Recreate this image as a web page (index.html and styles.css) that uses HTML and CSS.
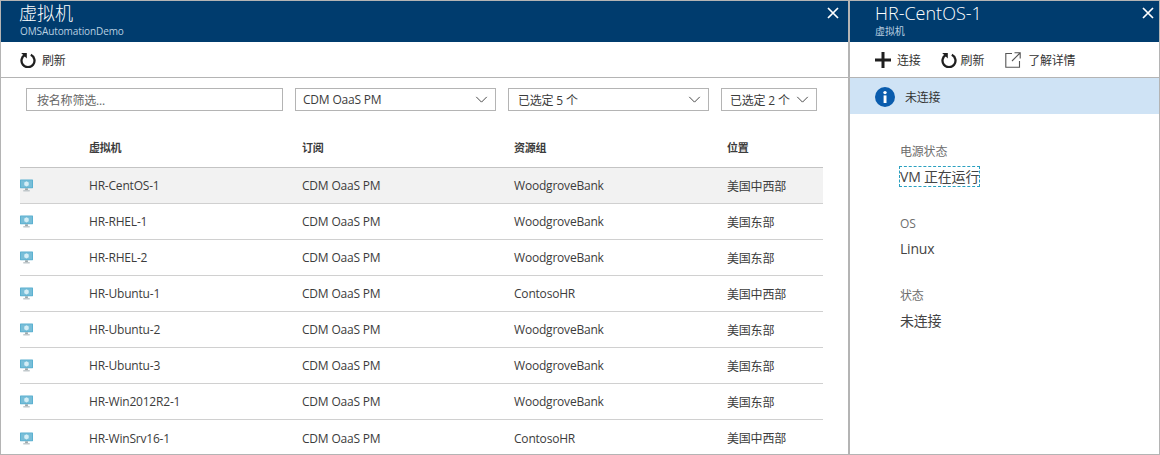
FILE: index.html
```html
<!DOCTYPE html>
<html lang="zh-CN">
<head>
    <meta charset="UTF-8">
    <title>虚拟机</title>
    <link rel="stylesheet" href="styles.css">
</head>
<body>
  <svg class="defs" width="0" height="0">
    <symbol id="refresh" viewBox="0 0 16 16">
      <path d="M5.2 2.8A6.5 6.5 0 1 0 10.8 2.8" fill="none" stroke="#1f1f1f" stroke-width="2.3"/>
      <path d="M1.2 1H6.8V6.6Z" fill="#1f1f1f"/>
    </symbol>
    <symbol id="chevron" viewBox="0 0 14 8">
      <path d="M1 1L7 7L13 1" fill="none" stroke="#444" stroke-width="1.1"/>
    </symbol>
    <symbol id="vm" viewBox="0 0 14 14">
      <rect x="0" y="0.5" width="14" height="9.5" rx="0.5" fill="#5ab0d0"/>
      <rect x="1" y="1.5" width="12" height="7.5" fill="#78bed8"/>
      <path d="M7 2.5L9.4 3.8V6.6L7 8L4.6 6.6V3.8Z" fill="#d5eef6"/>
      <rect x="5.5" y="10" width="3" height="2" fill="#9aa6aa"/>
      <rect x="3.5" y="12" width="7" height="1.4" fill="#b8c1c4"/>
    </symbol>
    <symbol id="close" viewBox="0 0 12 12">
      <path d="M1 1L11 11M11 1L1 11" stroke="#fff" stroke-width="1.7"/>
    </symbol>
  </svg>

  <div class="page">
    <section class="blade blade-list">
      <header class="blade-head">
        <div>
          <h1>虚拟机</h1>
          <div class="sub">OMSAutomationDemo</div>
        </div>
        <svg class="close"><use href="#close"/></svg>
      </header>
      <div class="toolbar">
        <span class="cmd"><svg class="ico"><use href="#refresh"/></svg>刷新</span>
      </div>
      <div class="filters">
        <div class="field f-name">按名称筛选...</div>
        <div class="field f-sub">CDM OaaS PM<svg class="chev"><use href="#chevron"/></svg></div>
        <div class="field f-group">已选定 5 个<svg class="chev"><use href="#chevron"/></svg></div>
        <div class="field f-loc">已选定 2 个<svg class="chev"><use href="#chevron"/></svg></div>
      </div>
      <div class="table">
        <div class="row head"><span></span><span>虚拟机</span><span>订阅</span><span>资源组</span><span>位置</span></div>
        <div class="row selected"><svg class="vm"><use href="#vm"/></svg><span>HR-CentOS-1</span><span>CDM OaaS PM</span><span>WoodgroveBank</span><span>美国中西部</span></div>
        <div class="row"><svg class="vm"><use href="#vm"/></svg><span>HR-RHEL-1</span><span>CDM OaaS PM</span><span>WoodgroveBank</span><span>美国东部</span></div>
        <div class="row"><svg class="vm"><use href="#vm"/></svg><span>HR-RHEL-2</span><span>CDM OaaS PM</span><span>WoodgroveBank</span><span>美国东部</span></div>
        <div class="row"><svg class="vm"><use href="#vm"/></svg><span>HR-Ubuntu-1</span><span>CDM OaaS PM</span><span>ContosoHR</span><span>美国中西部</span></div>
        <div class="row"><svg class="vm"><use href="#vm"/></svg><span>HR-Ubuntu-2</span><span>CDM OaaS PM</span><span>WoodgroveBank</span><span>美国东部</span></div>
        <div class="row"><svg class="vm"><use href="#vm"/></svg><span>HR-Ubuntu-3</span><span>CDM OaaS PM</span><span>WoodgroveBank</span><span>美国东部</span></div>
        <div class="row"><svg class="vm"><use href="#vm"/></svg><span>HR-Win2012R2-1</span><span>CDM OaaS PM</span><span>WoodgroveBank</span><span>美国东部</span></div>
        <div class="row last"><svg class="vm"><use href="#vm"/></svg><span>HR-WinSrv16-1</span><span>CDM OaaS PM</span><span>ContosoHR</span><span>美国中西部</span></div>
      </div>
    </section>

    <section class="blade blade-detail">
      <header class="blade-head">
        <div>
          <h1>HR-CentOS-1</h1>
          <div class="sub">虚拟机</div>
        </div>
        <svg class="close"><use href="#close"/></svg>
      </header>
      <div class="toolbar">
        <span class="cmd">
          <svg class="ico" viewBox="0 0 16 16"><path d="M0 8H16M8 0V16" stroke="#1f1f1f" stroke-width="3"/></svg>连接
        </span>
        <span class="cmd cmd-tight"><svg class="ico"><use href="#refresh"/></svg>刷新</span>
        <span class="cmd cmd-wide">
          <svg class="ico" viewBox="0 0 16 16"><path d="M7 1.5H0.8V15.2H14.5V9M9.5 0.8H15.2V6.5M15 1L7 9" fill="none" stroke="#555" stroke-width="1.1"/></svg>了解详情
        </span>
      </div>
      <div class="notice">
        <svg class="info" viewBox="0 0 20 20"><circle cx="10" cy="10" r="10" fill="#0a5cad"/><rect x="8.6" y="8.4" width="2.9" height="7.6" fill="#fff"/><circle cx="10" cy="5.6" r="1.7" fill="#fff"/></svg>
        未连接
      </div>
      <dl class="props">
        <dt>电源状态</dt>
        <dd><span class="focused">VM 正在运行</span></dd>
        <dt>OS</dt>
        <dd>Linux</dd>
        <dt>状态</dt>
        <dd>未连接</dd>
      </dl>
    </section>
  </div>
</body>
</html>
```
FILE: styles.css
```css
* {
    box-sizing: border-box;
}

html, body {
    height: 100%;
}

body {
    margin: 0;
    font-family: "Open Sans", "Noto Sans CJK SC", sans-serif;
    font-size: 12px;
    letter-spacing: -0.2px;
    color: #3c3c3c;
    background-color: #fff;
    overflow: hidden;
}

.defs {
    position: absolute;
}

.page {
    display: flex;
    height: 455px;
    border: 1px solid #b4b4b4;
}

.blade {
    display: flex;
    flex-direction: column;
    overflow: hidden;
}

.blade-list {
    width: 849px;
    border-right: 2px solid #b4b4b4;
}

.blade-detail {
    flex: 1;
}

.blade-head {
    display: flex;
    justify-content: space-between;
    height: 41px;
    flex: none;
    padding: 0 9px 0 18px;
    background-color: #003c6e;
    color: #fff;
}

.blade-detail .blade-head {
    padding: 0 5px 0 25px;
}

.blade-head h1 {
    margin: 0;
    font-size: 18px;
    font-weight: 300;
    line-height: 24px;
    letter-spacing: 0;
}

.sub {
    font-size: 10px;
    line-height: 14px;
    margin: -1px 0 0 1px;
    letter-spacing: -0.1px;
    color: #b9cfe0;
}

.blade-detail .sub {
    margin-left: 0;
}

.close {
    width: 12px;
    height: 12px;
    margin-top: 6px;
}

.toolbar {
    display: flex;
    align-items: center;
    gap: 20px;
    height: 36px;
    flex: none;
    padding-left: 19px;
    color: #333;
    border-bottom: 1px solid #b4b4b4;
}

.blade-detail .toolbar {
    padding-left: 25px;
}

.cmd {
    display: flex;
    align-items: center;
    gap: 6px;
}

.cmd-tight {
    gap: 4px;
}

.cmd-wide {
    gap: 7px;
    margin-left: 1px;
}

.ico {
    width: 16px;
    height: 16px;
}

.filters {
    display: flex;
    height: 43px;
    flex: none;
    padding: 10px 0 0 25px;
}

.field {
    display: flex;
    align-items: center;
    justify-content: space-between;
    height: 23px;
    margin-right: 12px;
    padding: 0 7px 0 7px;
    border: 1px solid #b4b4b4;
}

.f-name {
    width: 257px;
    color: #666;
    padding-left: 10px;
}

.f-sub {
    width: 201px;
}

.f-group {
    width: 201px;
    padding-left: 9px;
}

.f-loc {
    width: 96px;
    margin-right: 0;
    padding-left: 8px;
}

.chev {
    width: 13px;
    height: 7px;
    flex: none;
}

.table {
    width: 803px;
    margin-left: 19px;
}

.row {
    display: grid;
    grid-template-columns: 69px 213px 212px 213px 1fr;
    align-items: center;
    height: 36px;
    border-bottom: 1px solid #d0d0d0;
}

.row.head {
    height: 47px;
    padding-top: 5px;
    font-weight: bold;
    font-size: 11px;
    border-bottom-color: #c4c4c4;
}

.row.selected {
    background-color: #f2f2f2;
}

.row.last {
    border-bottom: none;
}

.vm {
    width: 13px;
    height: 13px;
}

.notice {
    display: flex;
    align-items: center;
    gap: 10px;
    height: 36px;
    flex: none;
    padding: 1px 0 0 25px;
    background-color: #cfe3f5;
    color: #333;
}

.info {
    width: 20px;
    height: 20px;
}

.props {
    margin: 0;
    padding: 28px 0 0 50px;
}

.props dt {
    color: #6e6e6e;
    line-height: 20px;
}

.props dd {
    margin: 5px 0 27px;
    font-size: 14px;
    line-height: 20px;
    color: #444;
}

.focused {
    display: inline-block;
    outline: 1px dashed #2aa0c0;
    line-height: 19px;
}
```
